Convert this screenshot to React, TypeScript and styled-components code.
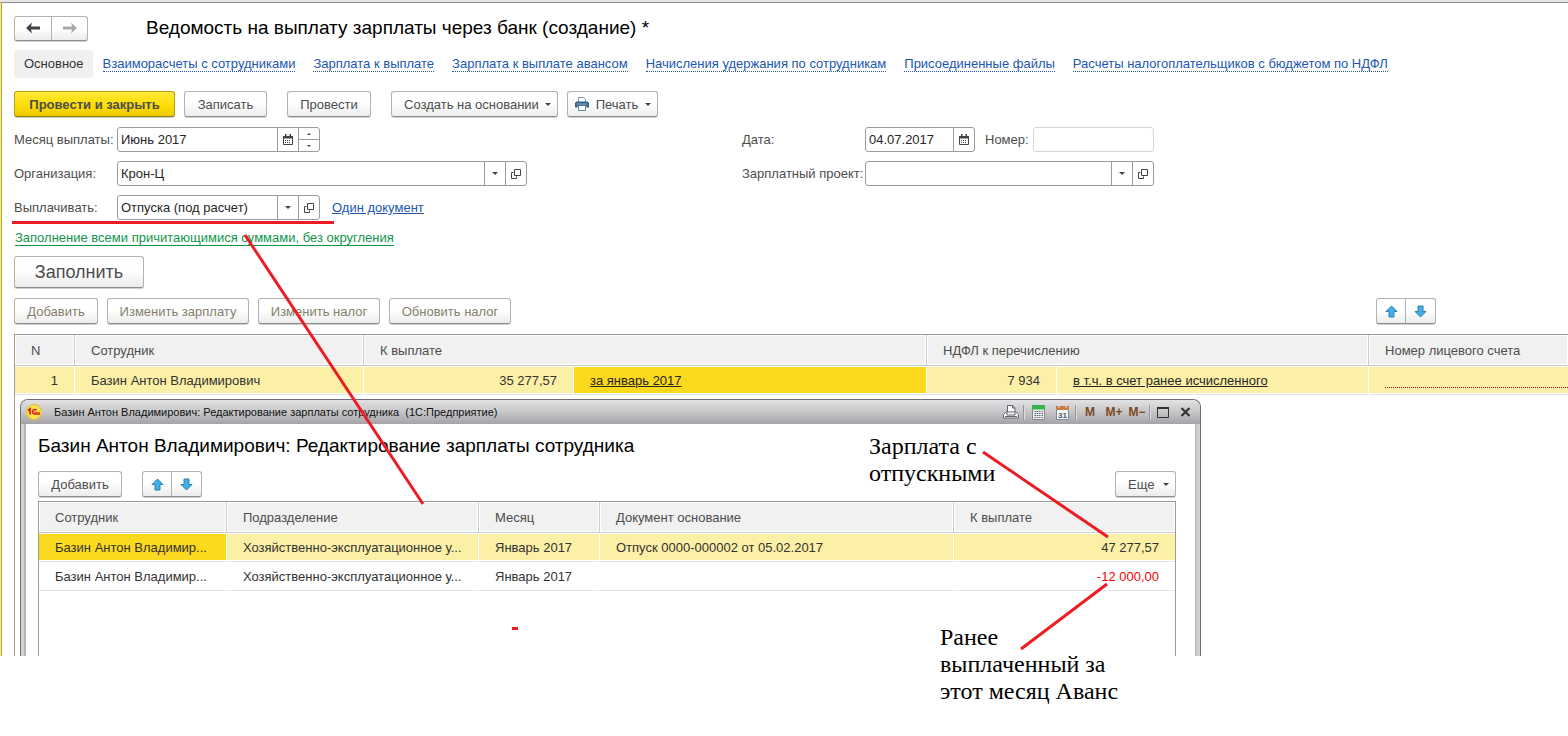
import React from "react";
import styled, { createGlobalStyle, css } from "styled-components";

const GlobalStyle = createGlobalStyle`
  * { box-sizing: border-box; }
  body { margin: 0; background: #fff; }
  body, button, input, table { font-family: "Liberation Sans", Arial, sans-serif; font-size: 13px; }
`;

const Page = styled.div`
  position: relative;
  min-height: 736px;
  overflow: hidden;
  color: #4d4d4d;
`;

const Frame = styled.main`
  overflow: hidden;
  border-top: 1px solid #8c8c8c;
  border-left: 1px solid #f3e9a0;
  padding-left: 13px;
  box-shadow: inset 1px 0 #b8a81c;
`;

const TopStrip = styled.div`
  height: 2px;
  background: #e6e6e6;
`;

const Header = styled.header`
  display: flex;
  align-items: center;
  gap: 58px;
  padding-top: 12px;
`;

const Title = styled.h1`
  margin: 0;
  color: #000;
  font-size: 19px;
  font-weight: 400;
  line-height: 26px;
  white-space: nowrap;
`;

const raised = css`
  border: 1px solid #b2b2b2;
  border-bottom-color: #8e8e8e;
  background: linear-gradient(#fff 45%, #ececec);
  box-shadow: 0 1px 0 #d0d0d0;
`;

const Pair = styled.div`
  ${raised}
  display: flex;
  flex: none;
  border-radius: 3px;
`;

const PairButton = styled.button<{ $w: number; $h: number }>`
  display: flex;
  align-items: center;
  justify-content: center;
  width: ${(p) => p.$w}px;
  height: ${(p) => p.$h}px;
  padding: 0;
  border: 0;
  background: none;
  &:first-child { border-right: 1px solid #b2b2b2; }
`;

const Tabs = styled.nav`
  display: flex;
  align-items: center;
  gap: 18px;
  margin-top: 9px;
  white-space: nowrap;
`;

const ActiveTab = styled.span`
  margin-right: -8px;
  padding: 0 9px 0 10px;
  border-radius: 4px;
  background: #f0f0f0;
  color: #333;
  line-height: 28px;
`;

const TabLink = styled.a`
  margin-top: 1px;
  border-bottom: 1px dotted #2257b0;
  color: #2257b0;
  line-height: 14px;
  text-decoration: none;
`;

const Toolbar = styled.div<{ $top: number }>`
  display: flex;
  gap: 9px;
  margin-top: ${(p) => p.$top}px;
`;

const Button = styled.button<{ $w: number; $primary?: boolean; $large?: boolean; $wideGap?: boolean }>`
  ${raised}
  display: flex;
  flex: none;
  align-items: center;
  justify-content: center;
  width: ${(p) => p.$w}px;
  height: ${(p) => (p.$large ? 32 : 26)}px;
  margin-left: ${(p) => (p.$wideGap ? 11 : 0)}px;
  padding: 0;
  border-radius: 3px;
  color: #4d4d4d;
  font-size: ${(p) => (p.$large ? 18 : 13)}px;
  white-space: nowrap;
  &:disabled { color: #857f6e; }
  ${(p) =>
    p.$primary &&
    css`
      border-color: #b8a21c;
      border-bottom-color: #8e7c10;
      background: linear-gradient(#ffe838, #fddc00 60%, #ecca00);
      font-weight: 700;
    `}
`;

const MenuButton = styled(Button)<{ $icon?: boolean }>`
  justify-content: space-between;
  padding: 0 6px 0 ${(p) => (p.$icon ? 7 : 12)}px;
`;

const Form = styled.div`
  display: grid;
  grid-template-columns: 728px 1fr;
  row-gap: 9px;
  margin-top: 10px;
`;

const FormRow = styled.div`
  display: flex;
  align-items: center;
  height: 25px;
`;

const Label = styled.label<{ $w: number; $after?: boolean }>`
  flex: none;
  width: ${(p) => p.$w}px;
  padding-left: ${(p) => (p.$after ? 10 : 0)}px;
  white-space: nowrap;
`;

const Field = styled.div<{ $w: number; $pale?: boolean }>`
  display: flex;
  flex: none;
  width: ${(p) => p.$w}px;
  height: 25px;
  border: 1px solid ${(p) => (p.$pale ? "#d6d6d6" : "#9b9b9b")};
  border-radius: 3px;
  background: #fff;
`;

const TextInput = styled.input`
  flex: 1;
  min-width: 0;
  padding: 0 3px;
  border: 0;
  outline: 0;
  background: none;
  color: #262626;
`;

const FieldButton = styled.button`
  display: flex;
  flex: none;
  align-items: center;
  justify-content: center;
  width: 21px;
  padding: 0;
  border: 0;
  border-left: 1px solid #9b9b9b;
  background: none;
`;

const Spinner = styled.div`
  display: flex;
  flex-direction: column;
  width: 21px;
  border-left: 1px solid #9b9b9b;
`;

const SpinButton = styled.button`
  display: flex;
  flex: 1;
  align-items: center;
  justify-content: center;
  padding: 0;
  border: 0;
  background: none;
  & + & { border-top: 1px solid #9b9b9b; }
`;

const DocLink = styled.a`
  margin-left: 12px;
  color: #2257b0;
`;

const FillLink = styled.a`
  display: block;
  width: max-content;
  margin: 11px 0 0 1px;
  border-bottom: 1px solid #10954a;
  color: #10954a;
  line-height: 14px;
  text-decoration: none;
`;

const MoveGroup = styled.div`
  margin: 0 132px 0 auto;
`;

const MainGrid = styled.div`
  margin-top: 10px;
  border-top: 1px solid #9b9b9b;
  border-left: 1px solid #9b9b9b;
`;

const InnerGrid = styled.div`
  min-height: 155px;
  margin-top: 4px;
  border: 1px solid #9b9b9b;
  border-bottom: 0;
`;

const Table = styled.table`
  width: 100%;
  border-spacing: 0;
  table-layout: fixed;
  white-space: nowrap;
`;

const Th = styled.th`
  height: 31px;
  padding: 0 16px;
  border-right: 1px solid #cacaca;
  border-bottom: 1px solid #cacaca;
  background: #f1f1f1;
  box-shadow: inset 0 0 0 1px #fff;
  font-weight: 400;
  text-align: left;
  &:last-child { border-right: 0; }
`;

const Td = styled.td<{ $tone?: "row" | "cell"; $right?: boolean; $negative?: boolean }>`
  height: 29px;
  padding: 0 16px;
  overflow: hidden;
  border-right: 1px solid #fff;
  border-bottom: 1px solid #e4e4e4;
  background: ${(p) => (p.$tone === "cell" ? "#fbd91f" : p.$tone === "row" ? "#fcf0a6" : "#fff")};
  box-shadow: inset 0 1px #fff, inset 0 -1px #fff;
  color: ${(p) => (p.$negative ? "#f00" : "#333")};
  text-align: ${(p) => (p.$right ? "right" : "left")};
  &:last-child { border-right: 0; }
`;

const CellLink = styled.a`
  color: #262626;
`;

const AccountInput = styled.input`
  display: block;
  width: 100%;
  height: 15px;
  padding: 0;
  border: 0;
  border-bottom: 1px dotted #e00000;
  outline: 0;
  background: none;
`;

const AccountTd = styled(Td)`
  padding-right: 0;
`;

const Dialog = styled.section`
  max-width: 1181px;
  margin: 4px 0 0 5px;
  overflow: hidden;
  border: 1px solid #707072;
  border-bottom: 0;
  border-radius: 8px 8px 0 0;
  background: linear-gradient(90deg, #d2d2d5 3px, #b4b4b8 3px, #b4b4b8 5px, #fff 5px, #fff calc(100% - 5px), #b8b8bb calc(100% - 5px), #d2d2d5 calc(100% - 2px));
`;

const TitleBar = styled.div`
  display: flex;
  align-items: center;
  height: 24px;
  padding: 0 4px 0 5px;
  background: linear-gradient(#e2e2e4, #c6c6c8 50%, #a4a4a8);
  color: #111;
  white-space: nowrap;
`;

const Caption = styled.span`
  flex: 1;
  margin-left: 12px;
  font-size: 11px;
  white-space: pre;
`;

const CaptionButton = styled.button<{ $w?: number }>`
  display: flex;
  align-items: center;
  justify-content: center;
  width: ${(p) => p.$w ?? 24}px;
  height: 22px;
  padding: 0;
  border: 0;
  background: none;
  color: #7b4a22;
  font-size: 12px;
  font-weight: 700;
`;

const CaptionSplit = styled.i`
  width: 2px;
  height: 15px;
  margin: 0 1px;
  border-left: 1px solid #98989a;
  border-right: 1px solid #dcdcdc;
`;

const DialogBody = styled.div`
  padding: 9px 24px 0 17px;
`;

const DialogTitle = styled.h2`
  margin: 0;
  color: #000;
  font-size: 19px;
  font-weight: 400;
  line-height: 26px;
`;

const DialogTools = styled.div`
  display: flex;
  justify-content: space-between;
  margin-top: 12px;
`;

const ToolSet = styled.div`
  display: flex;
  gap: 20px;
`;

const Marks = styled.svg`
  position: absolute;
  top: 0;
  left: 0;
  pointer-events: none;
`;

const Note = styled.p<{ $x: number; $y: number }>`
  position: absolute;
  top: ${(p) => p.$y}px;
  left: ${(p) => p.$x}px;
  margin: 0;
  color: #000;
  font-family: "Liberation Serif", "Times New Roman", serif;
  font-size: 24px;
  line-height: 27px;
  white-space: pre-line;
`;

const NavArrow = ({ back }: { back?: boolean }) => (
  <svg width="14" height="12" viewBox="0 0 14 12" aria-hidden="true">
    <path
      d={back ? "M0 6 6 .5 5 4.500H14v3H5l1 4z" : "M14 6 8 .5l1 4H0v3h9l-1 4z"}
      fill={back ? "#444" : "#a9a9a9"}
    />
  </svg>
);

const MoveArrow = ({ down }: { down?: boolean }) => (
  <svg width="13" height="13" viewBox="0 0 13 13" aria-hidden="true">
    <path
      d={down ? "M6.5 12 1 6.5h3V1h5v5.500h3z" : "M6.500 1 12 6.500H9V12H4V6.500H1z"}
      fill="#41b0ea"
      stroke="#3180aa"
      strokeLinejoin="round"
    />
  </svg>
);

const Caret = ({ small, up }: { small?: boolean; up?: boolean }) => (
  <svg width={small ? 4 : 6} height={small ? 2 : 3} viewBox="0 0 6 3" aria-hidden="true">
    <path d={up ? "M0 3h6L3 0z" : "M0 0h6L3 3z"} fill="#444" />
  </svg>
);

const CalendarIcon = () => (
  <svg width="10" height="11" viewBox="0 0 10 11" aria-hidden="true">
    <path d="M.5 2.500h9v8h-9z" fill="#fff" stroke="#444" />
    <path d="M0 2h10v2.500H0zM2 0h1.500v2H2zM6.500 0H8v2H6.500z" fill="#444" />
    <path d="M2 6.500h6M2 8.500h6" stroke="#444" strokeDasharray="1 1" />
  </svg>
);

const OpenIcon = () => (
  <svg width="10" height="10" viewBox="0 0 10 10" fill="none" stroke="#444" aria-hidden="true">
    <path d="M3.500.5h6v6h-6zM2.500 3.500h-2v6h5v-2" />
  </svg>
);

const PrinterIcon = () => (
  <svg width="14" height="14" viewBox="0 0 14 14" aria-hidden="true">
    <path d="M3.500 5V.5h5l2 2V5" fill="#fff" stroke="#7d97ad" />
    <path d="M1.500 4.500h11L14 6v4.500h-2.500V9h-9v1.500H0V6z" fill="#2f6088" />
    <path d="M1.500 7h11" stroke="#8fb0cb" />
    <path d="M3.500 8.500h7v5h-7z" fill="#fff" stroke="#5f8098" />
  </svg>
);

const BrandIcon = () => (
  <svg width="16" height="16" viewBox="0 0 16 16" aria-hidden="true">
    <circle cx="8" cy="8" r="7.500" fill="#fbe14a" stroke="#e9bd35" />
    <g fill="none" stroke="#d81e1e">
      <path d="M2 6.500 4 5v5.500" strokeWidth="1.700" />
      <path d="M10.500 6.300A2.300 2.300 0 1 0 8.500 10H14" strokeWidth="1.400" />
      <path d="M9.300 7.300a.8.8 0 1 0-.6 1.200H14" strokeWidth=".7" />
    </g>
  </svg>
);

const CaptionPrint = () => (
  <svg width="16" height="14" viewBox="0 0 16 14" fill="#f8f8f8" stroke="#626870" aria-hidden="true">
    <path d="M4.500 7V.5h5l2.500 2.500v4" />
    <path d="M9.500.5V3H12" fill="none" />
    <path d="M3 7h10l2.500 2.500v3.500H.5V9.500z" />
    <path d="M4 7.500v2.500h8V7.500M2 11.500h12" fill="none" />
  </svg>
);

const CaptionCalc = () => (
  <svg width="13" height="15" viewBox="0 0 13 15" aria-hidden="true">
    <path d="M.5.5h12v14H.5z" fill="#eef1f3" stroke="#7e898f" />
    <path d="M0 0h13v4.500H0z" fill="#38b54a" />
    <path d="M2.500 6.500h6m-6 2h6m-6 2h6m-6 2h6" stroke="#59646c" strokeDasharray="1.500 .8" />
    <path d="M9.500 6.500H11" stroke="#d33" />
    <path d="M9.500 8.500H11m-1.500 2H11m-1.500 2H11" stroke="#59646c" />
  </svg>
);

const CaptionCalendar = () => (
  <svg width="13" height="15" viewBox="0 0 13 15" aria-hidden="true">
    <path d="M.5 1.500h12v13H.5z" fill="#f4f6f8" stroke="#7e8b9a" />
    <path d="M0 1h13v4H0z" fill="#c77d45" />
    <path d="M3 0v3M10 0v3" stroke="#f3dcc8" />
    <text x="6.500" y="12.500" textAnchor="middle" fontSize="8" fontWeight="700" fill="#4c5968">31</text>
  </svg>
);

const MaxIcon = () => (
  <svg width="12" height="11" viewBox="0 0 12 11" aria-hidden="true">
    <path d="M.5 1h11v9.500H.5z" fill="none" stroke="#333" />
    <path d="M0 1h12" stroke="#333" strokeWidth="2" />
  </svg>
);

const CloseIcon = () => (
  <svg width="11" height="10" viewBox="0 0 11 10" aria-hidden="true">
    <path d="m1.500 1 8 8m0-8-8 8" stroke="#333" strokeWidth="2.200" />
  </svg>
);

const MovePair = () => (
  <Pair>
    <PairButton $w={29} $h={24} aria-label="Вверх"><MoveArrow /></PairButton>
    <PairButton $w={29} $h={24} aria-label="Вниз"><MoveArrow down /></PairButton>
  </Pair>
);

const links = [
  "Взаиморасчеты с сотрудниками",
  "Зарплата к выплате",
  "Зарплата к выплате авансом",
  "Начисления удержания по сотрудникам",
  "Присоединенные файлы",
  "Расчеты налогоплательщиков с бюджетом по НДФЛ",
];

const Columns = ({ widths }: { widths: number[] }) => (
  <colgroup>
    {widths.map((w, i) => <col key={i} width={w} />)}
    <col />
  </colgroup>
);

const SelectButtons = () => (
  <>
    <FieldButton aria-label="Выбрать"><Caret /></FieldButton>
    <FieldButton aria-label="Открыть"><OpenIcon /></FieldButton>
  </>
);

const PayrollDialog = () => (
  <Dialog role="dialog" aria-labelledby="dialog-title">
    <TitleBar>
      <BrandIcon />
      <Caption>{"Базин Антон Владимирович: Редактирование зарплаты сотрудника  (1С:Предприятие)"}</Caption>
      <CaptionButton $w={22} aria-label="Печать"><CaptionPrint /></CaptionButton>
      <CaptionSplit />
      <CaptionButton aria-label="Калькулятор"><CaptionCalc /></CaptionButton>
      <CaptionButton aria-label="Календарь"><CaptionCalendar /></CaptionButton>
      <CaptionSplit />
      <CaptionButton>M</CaptionButton>
      <CaptionButton>M+</CaptionButton>
      <CaptionButton $w={22}>M−</CaptionButton>
      <CaptionSplit />
      <CaptionButton $w={22} aria-label="Развернуть"><MaxIcon /></CaptionButton>
      <CaptionButton $w={22} aria-label="Закрыть"><CloseIcon /></CaptionButton>
    </TitleBar>
    <DialogBody>
      <DialogTitle id="dialog-title">Базин Антон Владимирович: Редактирование зарплаты сотрудника</DialogTitle>
      <DialogTools>
        <ToolSet>
          <Button $w={84}>Добавить</Button>
          <MovePair />
        </ToolSet>
        <MenuButton $w={61}>Еще <Caret /></MenuButton>
      </DialogTools>
      <InnerGrid>
        <Table>
          <Columns widths={[188, 252, 121, 354]} />
          <thead>
            <tr>
              <Th>Сотрудник</Th>
              <Th>Подразделение</Th>
              <Th>Месяц</Th>
              <Th>Документ основание</Th>
              <Th>К выплате</Th>
            </tr>
          </thead>
          <tbody>
            <tr>
              <Td $tone="cell">Базин Антон Владимир...</Td>
              <Td $tone="row">Хозяйственно-эксплуатационное у...</Td>
              <Td $tone="row">Январь 2017</Td>
              <Td $tone="row">Отпуск 0000-000002 от 05.02.2017</Td>
              <Td $tone="row" $right>47 277,57</Td>
            </tr>
            <tr>
              <Td>Базин Антон Владимир...</Td>
              <Td>Хозяйственно-эксплуатационное у...</Td>
              <Td>Январь 2017</Td>
              <Td />
              <Td $right $negative>-12 000,00</Td>
            </tr>
          </tbody>
        </Table>
      </InnerGrid>
    </DialogBody>
  </Dialog>
);

export default function App() {
  return (
    <Page>
      <GlobalStyle />
      <TopStrip />
      <Frame>
        <Header>
          <Pair>
            <PairButton $w={37} $h={23} aria-label="Назад"><NavArrow back /></PairButton>
            <PairButton $w={35} $h={23} aria-label="Вперед"><NavArrow /></PairButton>
          </Pair>
          <Title>Ведомость на выплату зарплаты через банк (создание) *</Title>
        </Header>
        <Tabs>
          <ActiveTab>Основное</ActiveTab>
          {links.map((text) => <TabLink key={text} href="#">{text}</TabLink>)}
        </Tabs>
        <Toolbar $top={13}>
          <Button $w={161} $primary>Провести и закрыть</Button>
          <Button $w={83}>Записать</Button>
          <Button $w={84} $wideGap>Провести</Button>
          <MenuButton $w={167} $wideGap>Создать на основании <Caret /></MenuButton>
          <MenuButton $w={91} $icon><PrinterIcon />Печать <Caret /></MenuButton>
        </Toolbar>
        <Form>
          <FormRow>
            <Label $w={103} htmlFor="month">Месяц выплаты:</Label>
            <Field $w={203}>
              <TextInput id="month" defaultValue="Июнь 2017" />
              <FieldButton aria-label="Календарь"><CalendarIcon /></FieldButton>
              <Spinner>
                <SpinButton aria-label="Больше"><Caret small up /></SpinButton>
                <SpinButton aria-label="Меньше"><Caret small /></SpinButton>
              </Spinner>
            </Field>
          </FormRow>
          <FormRow>
            <Label $w={123} htmlFor="date">Дата:</Label>
            <Field $w={110}>
              <TextInput id="date" defaultValue="04.07.2017" />
              <FieldButton aria-label="Календарь"><CalendarIcon /></FieldButton>
            </Field>
            <Label $w={58} $after htmlFor="number">Номер:</Label>
            <Field $w={121} $pale><TextInput id="number" /></Field>
          </FormRow>
          <FormRow>
            <Label $w={103} htmlFor="org">Организация:</Label>
            <Field $w={410}>
              <TextInput id="org" defaultValue="Крон-Ц" />
              <SelectButtons />
            </Field>
          </FormRow>
          <FormRow>
            <Label $w={123} htmlFor="project">Зарплатный проект:</Label>
            <Field $w={289}>
              <TextInput id="project" />
              <SelectButtons />
            </Field>
          </FormRow>
          <FormRow>
            <Label $w={103} htmlFor="kind">Выплачивать:</Label>
            <Field $w={203}>
              <TextInput id="kind" defaultValue="Отпуска (под расчет)" />
              <SelectButtons />
            </Field>
            <DocLink href="#">Один документ</DocLink>
          </FormRow>
        </Form>
        <FillLink href="#">Заполнение всеми причитающимися суммами, без округления</FillLink>
        <Toolbar $top={10}>
          <Button $w={130} $large>Заполнить</Button>
        </Toolbar>
        <Toolbar $top={10}>
          <Button $w={84} disabled>Добавить</Button>
          <Button $w={142} disabled>Изменить зарплату</Button>
          <Button $w={122} disabled>Изменить налог</Button>
          <Button $w={122} disabled>Обновить налог</Button>
          <MoveGroup><MovePair /></MoveGroup>
        </Toolbar>
        <MainGrid>
          <Table>
            <Columns widths={[60, 289, 210, 353, 130, 312]} />
            <thead>
              <tr>
                <Th>N</Th>
                <Th>Сотрудник</Th>
                <Th colSpan={2}>К выплате</Th>
                <Th colSpan={2}>НДФЛ к перечислению</Th>
                <Th>Номер лицевого счета</Th>
              </tr>
            </thead>
            <tbody>
              <tr>
                <Td $tone="row" $right>1</Td>
                <Td $tone="row">Базин Антон Владимирович</Td>
                <Td $tone="row" $right>35 277,57</Td>
                <Td $tone="cell"><CellLink href="#">за январь 2017</CellLink></Td>
                <Td $tone="row" $right>7 934</Td>
                <Td $tone="row"><CellLink href="#">в т.ч. в счет ранее исчисленного</CellLink></Td>
                <AccountTd $tone="row"><AccountInput aria-label="Номер лицевого счета" /></AccountTd>
              </tr>
            </tbody>
          </Table>
          <PayrollDialog />
        </MainGrid>
      </Frame>
      <Marks width="1568" height="736" viewBox="0 0 1568 736" aria-hidden="true">
        <g stroke="#ed1c24" strokeWidth="3">
          <path d="M12 222.500H334" />
          <path d="M245 235 423 504" />
          <path d="M983 452 1108 537" />
          <path d="M1107 584 1021 649" />
          <path d="M512 628.500H518" />
        </g>
      </Marks>
      <Note $x={869} $y={433}>{"Зарплата с\nотпускными"}</Note>
      <Note $x={940} $y={624}>{"Ранее\nвыплаченный за\nэтот месяц Аванс"}</Note>
    </Page>
  );
}
